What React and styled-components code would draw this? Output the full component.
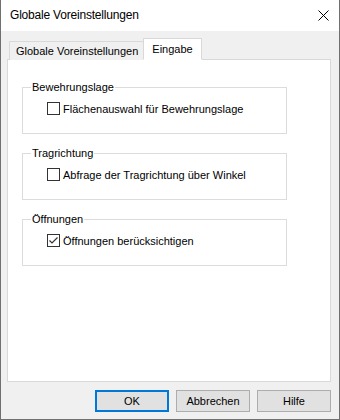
import React from "react";
import styled, { createGlobalStyle } from "styled-components";

const Global = createGlobalStyle`
  html, body { margin: 0; padding: 0; background: #ffffff; }
  * { box-sizing: border-box; }
`;

const Window = styled.div`
  width: 340px;
  height: 420px;
  border: 1px solid #707070;
  border-top: none;
  background: #f0f0f0;
  display: flex;
  flex-direction: column;
  font-family: "Liberation Sans", Arial, sans-serif;
  font-size: 11px;
  color: #000;
`;

const TitleBar = styled.div`
  height: 31px;
  flex: none;
  background: #ffffff;
  display: flex;
  align-items: center;
  justify-content: space-between;
  padding: 0 10px 1px 9px;
  font-size: 12px;
  letter-spacing: -0.2px;
`;

const CloseIcon = styled.svg`
  width: 11px;
  height: 11px;
  display: block;
`;

const Body = styled.div`
  flex: 1;
  display: flex;
  flex-direction: column;
  padding: 7px 8px 7px 6px;
`;

const TabRow = styled.div`
  display: flex;
  align-items: flex-end;
  height: 21px;
  padding-left: 2px;
`;

const Tab = styled.div`
  height: ${(p) => (p.$active ? "22px" : "19px")};
  margin-bottom: -1px;
  margin-left: ${(p) => (p.$active ? "-1px" : "0")};
  padding: ${(p) => (p.$active ? "0 8px 1px 8px" : "0 5px 0 6px")};
  border: 1px solid #d9d9d9;
  border-bottom: ${(p) => (p.$active ? "1px solid #ffffff" : "none")};
  background: ${(p) => (p.$active ? "#ffffff" : "#f0f0f0")};
  display: flex;
  align-items: center;
  position: relative;
  z-index: ${(p) => (p.$active ? 2 : 1)};
  white-space: nowrap;
`;

const Panel = styled.div`
  height: 323px;
  background: #ffffff;
  border: 1px solid #d9d9d9;
  padding: 21px 0 0 14px;
  display: flex;
  flex-direction: column;
  gap: 13px;
`;

const Group = styled.fieldset`
  margin: 0;
  padding: 8px 0 18px 0;
  width: 265px;
  min-inline-size: 0;
  border: 1px solid #dcdcdc;
`;

const Legend = styled.legend`
  margin-left: 8px;
  padding: 0 1px;
  line-height: 13px;
  height: 13px;
`;

const CheckRow = styled.label`
  display: flex;
  align-items: center;
  height: 13px;
  gap: 3px;
  margin-left: 24px;
  white-space: nowrap;
`;

const Box = styled.span`
  width: 13px;
  height: 13px;
  flex: none;
  border: 1px solid #333333;
  background: #ffffff;
  display: flex;
  align-items: center;
  justify-content: center;
`;

const ButtonRow = styled.div`
  display: flex;
  justify-content: flex-end;
  gap: 7px;
  padding-top: 8px;
`;

const Button = styled.button`
  width: 74px;
  height: 22px;
  margin: 0;
  padding: 0;
  font-family: inherit;
  font-size: 11px;
  color: #000;
  background: #e1e1e1;
  border: ${(p) => (p.$default ? "2px solid #0078d7" : "1px solid #adadad")};
`;

function CheckBox({ checked, label }) {
  return (
    <CheckRow>
      <Box>
        {checked && (
          <svg width="11" height="11" viewBox="0 0 11 11">
            <polyline points="1.5,5.5 4,8 9.5,2.5" fill="none" stroke="#333" strokeWidth="1.2" />
          </svg>
        )}
      </Box>
      <span>{label}</span>
    </CheckRow>
  );
}

export default function App() {
  return (
    <>
      <Global />
      <Window>
        <TitleBar>
          <span>Globale Voreinstellungen</span>
          <CloseIcon viewBox="0 0 11 11">
            <path d="M0.5 0.5 L10.5 10.5 M10.5 0.5 L0.5 10.5" stroke="#000" strokeWidth="1" fill="none" />
          </CloseIcon>
        </TitleBar>
        <Body>
          <TabRow>
            <Tab>Globale Voreinstellungen</Tab>
            <Tab $active>Eingabe</Tab>
          </TabRow>
          <Panel>
            <Group>
              <Legend>Bewehrungslage</Legend>
              <CheckBox label="Flächenauswahl für Bewehrungslage" />
            </Group>
            <Group>
              <Legend>Tragrichtung</Legend>
              <CheckBox label="Abfrage der Tragrichtung über Winkel" />
            </Group>
            <Group>
              <Legend>Öffnungen</Legend>
              <CheckBox checked label="Öffnungen berücksichtigen" />
            </Group>
          </Panel>
          <ButtonRow>
            <Button $default>OK</Button>
            <Button>Abbrechen</Button>
            <Button>Hilfe</Button>
          </ButtonRow>
        </Body>
      </Window>
    </>
  );
}
